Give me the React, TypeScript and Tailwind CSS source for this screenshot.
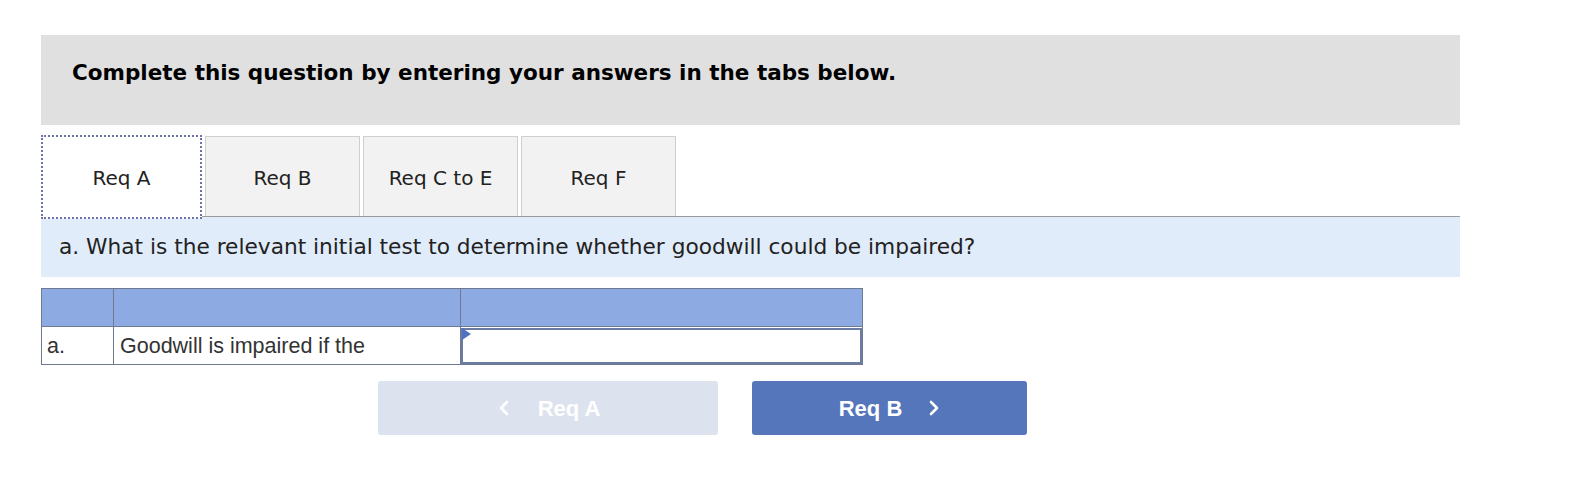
import { ChevronLeft, ChevronRight } from 'lucide-react';

const tabs = ['Req A', 'Req B', 'Req C to E', 'Req F'];

const verdana = "font-['DejaVu_Sans',Verdana,sans-serif]";
const arial = "font-['Liberation_Sans',Arial,sans-serif]";

export default function App() {
  return (
    <div className="min-h-[498px] bg-white pt-[35px] pl-[41px]">
      <div className="w-[1419px]">
        {/* encabezado */}
        <div className="h-[90px] bg-[#e0e0e0] pl-[31px] pt-[24px]">
          <h2 className={`${verdana} text-[21.5px] leading-[28px] font-bold text-black`}>
            Complete this question by entering your answers in the tabs below.
          </h2>
        </div>

        {/* pestañas */}
        <div className="mt-[10px] flex h-[82px] items-end gap-[3px] border-b border-[#9a9a9a]">
          {tabs.map((t, i) =>
            i === 0 ? (
              <div
                key={t}
                className={`${verdana} relative -mb-[3px] flex h-[84px] w-[161px] items-center justify-center border-2 border-dotted border-[#6b73a8] bg-white pt-[2px] text-[20px] text-[#222]`}
              >
                {t}
              </div>
            ) : (
              <div
                key={t}
                className={`${verdana} flex h-[80px] w-[155px] items-center justify-center border border-b-0 border-[#cfcfcf] bg-[#f2f2f2] pt-[2px] text-[20px] text-[#222]`}
              >
                {t}
              </div>
            )
          )}
        </div>

        {/* pregunta */}
        <div className="flex h-[60px] items-center bg-[#e1ecfa] pl-[18px]">
          <p className={`${verdana} text-[21.7px] text-[#222]`}>
            a. What is the relevant initial test to determine whether goodwill could be impaired?
          </p>
        </div>

        {/* tabla */}
        <table className={`${arial} mt-[11px] w-[821px] table-fixed border-collapse text-[21.5px] text-[#333]`}>
          <colgroup>
            <col className="w-[72px]" />
            <col className="w-[347px]" />
            <col className="w-[402px]" />
          </colgroup>
          <thead>
            <tr className="h-[38px] bg-[#8eaae2]">
              <th className="border border-[#6d7a90]" />
              <th className="border border-[#6d7a90]" />
              <th className="border border-[#6d7a90]" />
            </tr>
          </thead>
          <tbody>
            <tr className="h-[38px]">
              <td className="border border-[#6d7a90] pl-[5px] leading-[36px]">a.</td>
              <td className="border border-[#6d7a90] pl-[6px] leading-[36px]">Goodwill is impaired if the</td>
              <td className="relative border border-[#6d7a90] p-0">
                <div className="h-[36px] border-2 border-[#6a7ca3] bg-white" />
                <svg className="absolute left-[1px] top-[1px]" width="9" height="12" viewBox="0 0 9 12">
                  <path d="M0 0 L9 6 L0 12 Z" fill="#4f73c0" />
                </svg>
              </td>
            </tr>
          </tbody>
        </table>

        {/* navegación */}
        <div className="mt-[16px] ml-[337px] flex gap-[34px]">
          <button
            className={`${arial} flex h-[54px] w-[340px] items-center justify-center gap-[22px] rounded-[3px] bg-[#dce3ef] pr-[4px] text-[22px] font-bold text-white`}
          >
            <ChevronLeft size={24} strokeWidth={2.6} />
            Req A
          </button>
          <button
            className={`${arial} flex h-[54px] w-[275px] items-center justify-center gap-[20px] rounded-[3px] bg-[#5576ba] pl-[6px] text-[22px] font-bold text-white`}
          >
            Req B
            <ChevronRight size={24} strokeWidth={2.6} />
          </button>
        </div>
      </div>
    </div>
  );
}
